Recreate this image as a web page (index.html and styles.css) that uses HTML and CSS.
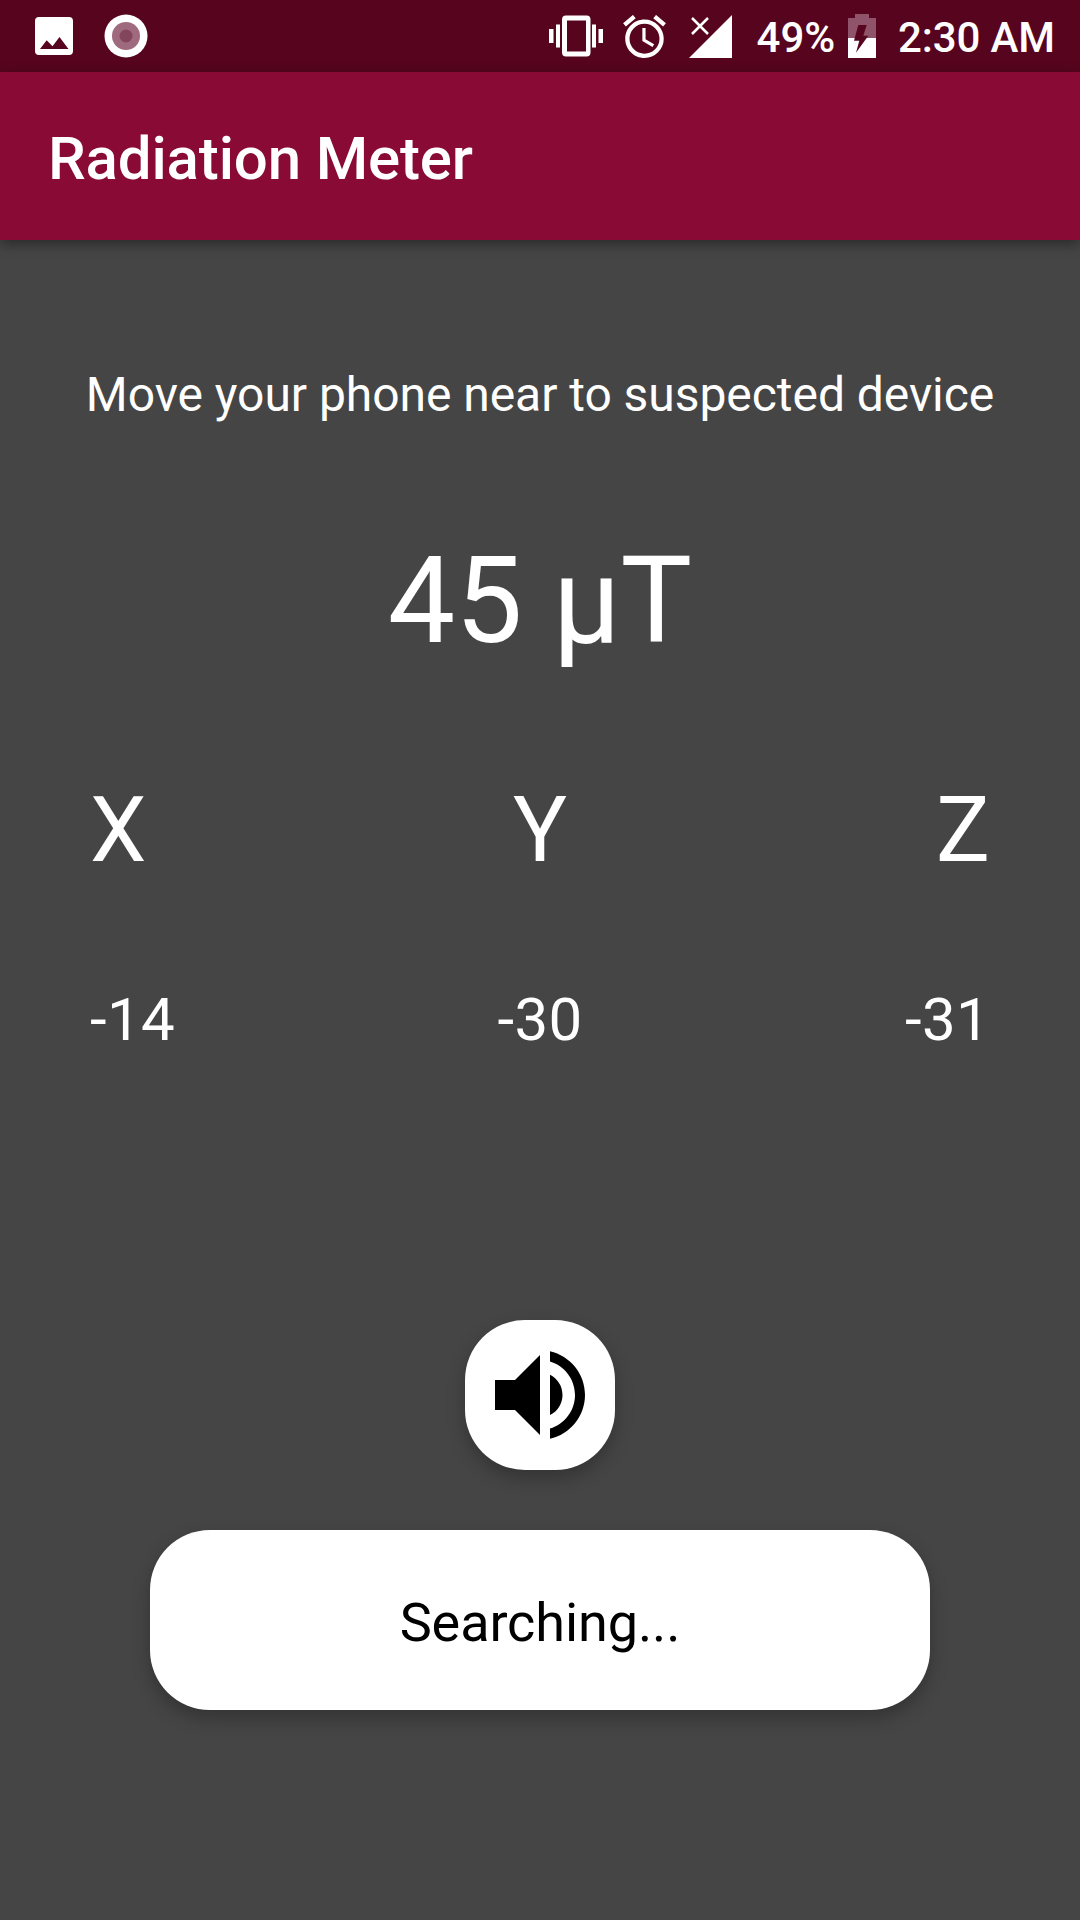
FILE: index.html
```html
<!DOCTYPE html>
<html lang="en">
<head>
    <meta charset="UTF-8">
    <meta name="viewport" content="width=device-width, initial-scale=1.0">
    <title>Radiation Meter</title>
    <link rel="stylesheet" href="styles.css">
</head>
<body>
    <div class="status-bar">
        <div class="status-left">
            <svg class="icon-image" width="38" height="38" viewBox="0 0 38 38">
                <path fill="#fff" fill-rule="evenodd" d="M4 0h30a4 4 0 0 1 4 4v30a4 4 0 0 1-4 4H4a4 4 0 0 1-4-4V4a4 4 0 0 1 4-4zM5 32h28.500L24.500 20 17.500 29.300 11.700 23.300z"/>
            </svg>
            <svg class="icon-record" width="44" height="44" viewBox="0 0 44 44">
                <circle cx="22" cy="22" r="21.500" fill="#fff"/>
                <circle cx="22" cy="22" r="14" fill="#a06a7e"/>
                <circle cx="22" cy="22" r="6.500" fill="#82455b"/>
            </svg>
        </div>
        <div class="status-right">
            <svg class="icon-vibrate" width="54" height="42" viewBox="0 0 54 42">
                <path fill="#fff" fill-rule="evenodd" d="M17 .5h20.500a4 4 0 0 1 4 4v33a4 4 0 0 1-4 4H17a4 4 0 0 1-4-4v-33a4 4 0 0 1 4-4zM18 5.500v31h19v-31zM0 14h4.500v14H0zM7 9.500h4v23H7zM43 9.500h4v23h-4zM49.500 14H54v14h-4.500z"/>
            </svg>
            <svg class="icon-alarm" width="43" height="43" viewBox="2 1.900 20 20.100">
                <path fill="#fff" d="M22 5.720l-4.600-3.860-1.290 1.530 4.600 3.860L22 5.720zM7.880 3.390L6.600 1.860 2 5.710l1.290 1.530 4.590-3.850zM12.500 8H11v6l4.750 2.850.750-1.230-4-2.370V8zM12 4c-4.970 0-9 4.030-9 9s4.020 9 9 9a9 9 0 0 0 0-18zm0 16a7 7 0 1 1 0-14 7 7 0 0 1 0 14z"/>
            </svg>
            <svg class="icon-signal" width="43" height="43" viewBox="0 0 43 43">
                <path fill="#fff" d="M43 0v43H0z"/>
                <path stroke="#fff" stroke-width="2.500" d="M3 3l16 16M19 3L3 19"/>
            </svg>
            <span class="battery-text">49%</span>
            <svg class="icon-battery" width="28" height="44" viewBox="0 0 28 44">
                <path fill="#8f536a" d="M7 0h14v4h7v20H0V4h7z"/>
                <path fill="#fff" d="M0 24h28v20H0z"/>
                <path fill="#57051f" d="M10.300 11h8.400l-3.400 10.700h5L8 38.700l3.300-12H6z"/>
            </svg>
            <span class="clock">2:30 AM</span>
        </div>
    </div>
    <header class="app-bar">
        <h1>Radiation Meter</h1>
    </header>
    <main>
        <p class="hint">Move your phone near to suspected device</p>
        <p class="reading">45 µT</p>
        <div class="axes">
            <span>X</span>
            <span>Y</span>
            <span>Z</span>
        </div>
        <div class="values">
            <span>-14</span>
            <span>-30</span>
            <span>-31</span>
        </div>
        <button class="sound-btn" aria-label="Sound">
            <svg width="120" height="120" viewBox="0 0 24 24">
                <path d="M3 9v6h4l5 5V4L7 9H3zm13.500 3c0-1.770-1.020-3.290-2.500-4.030v8.050c1.480-.730 2.500-2.250 2.500-4.020zM14 3.230v2.060c2.890.860 5 3.540 5 6.710s-2.110 5.850-5 6.710v2.060c4.010-.910 7-4.490 7-8.770s-2.990-7.860-7-8.770z"/>
            </svg>
        </button>
        <button class="search-btn">Searching...</button>
    </main>
</body>
</html>
```
FILE: styles.css
```css
* {
    box-sizing: border-box;
}

body {
    margin: 0;
    height: 1920px;
    background-color: #454545;
    color: #fff;
    font-family: Roboto, sans-serif;
    overflow: hidden;
}

svg {
    display: block;
}

p, h1 {
    margin: 0;
    font-weight: 400;
}

.status-bar {
    display: flex;
    justify-content: space-between;
    height: 72px;
    padding: 0 25px 0 35px;
    background-color: #57051f;
}

.status-left,
.status-right {
    display: flex;
    align-items: center;
}

.icon-record {
    margin-left: 31px;
}

.icon-alarm {
    margin-left: 20px;
}

.icon-signal {
    margin-left: 23px;
}

.battery-text,
.clock {
    padding-top: 3px;
    font-size: 42px;
    font-weight: 500;
    line-height: 72px;
    letter-spacing: -0.1px;
    white-space: nowrap;
}

.battery-text {
    margin-left: 25px;
}

.icon-battery {
    margin-left: 13px;
}

.clock {
    margin-left: 22px;
}

.app-bar {
    display: flex;
    align-items: center;
    height: 168px;
    padding: 5px 0 0 48px;
    background-color: #880a35;
    box-shadow: 0 4px 12px rgba(0, 0, 0, 0.4);
}

.app-bar h1 {
    font-size: 60px;
    font-weight: 500;
    letter-spacing: -0.15px;
}

main {
    display: flex;
    flex-direction: column;
    align-items: center;
}

.hint {
    margin-top: 120px;
    font-size: 48px;
    line-height: 70px;
    letter-spacing: -0.05px;
    white-space: nowrap;
}

.reading {
    margin-top: 101px;
    font-size: 120px;
    line-height: 140px;
}

.axes,
.values {
    display: grid;
    grid-template-columns: 1fr auto 1fr;
    width: 900px;
}

.axes span:last-child,
.values span:last-child {
    text-align: right;
}

.axes {
    margin-top: 100px;
    font-size: 90px;
    line-height: 120px;
}

.values {
    margin-top: 89px;
    font-size: 60px;
    line-height: 80px;
    letter-spacing: 0.3px;
}

button {
    display: flex;
    align-items: center;
    justify-content: center;
    padding: 0;
    border: none;
    border-radius: 60px;
    background-color: #fff;
    color: #000;
    font-family: inherit;
    box-shadow: 0 8px 18px rgba(0, 0, 0, 0.26);
}

.sound-btn {
    width: 150px;
    height: 150px;
    margin-top: 260px;
}

.search-btn {
    width: 780px;
    height: 180px;
    margin-top: 60px;
    padding-top: 5px;
    font-size: 54px;
    letter-spacing: -0.1px;
}
```
